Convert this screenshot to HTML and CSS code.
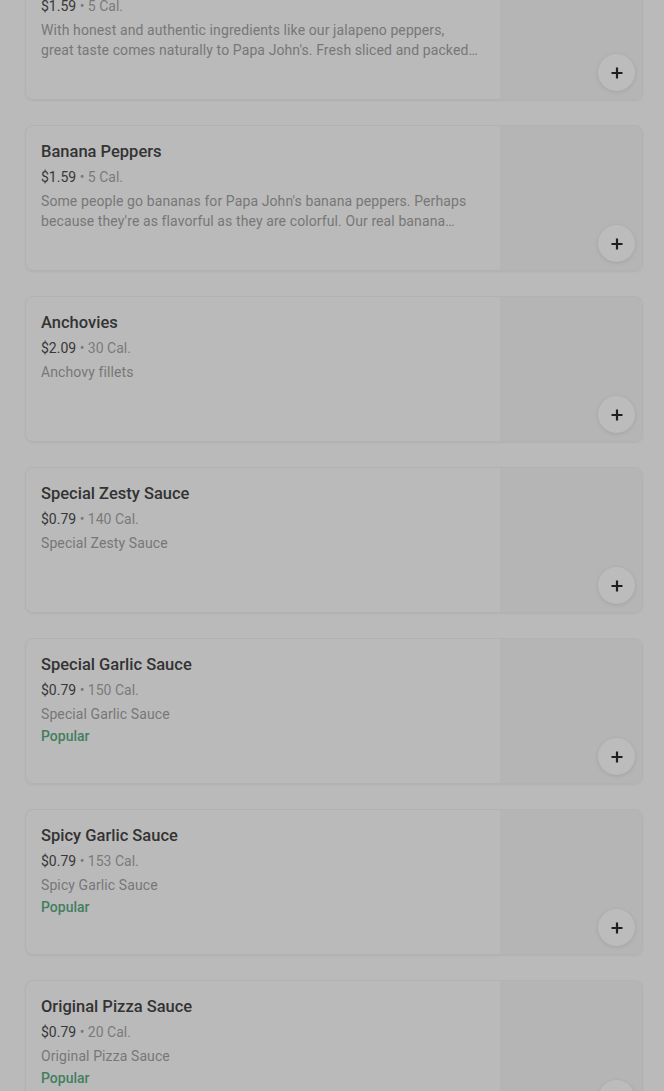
FILE: index.html
```html
<!DOCTYPE html>
<html lang="en">
<head>
    <meta charset="UTF-8">
    <title>Toppings</title>
    <link rel="stylesheet" href="styles.css">
</head>
<body>

    <!-- Item list -->
    <ul class="item-list">
        <li class="item-card">
            <div class="item-info">
                <h3 class="item-title">Jalapeno Peppers</h3>
                <p class="item-meta"><span class="price">$1.59</span> • 5 Cal.</p>
                <p class="item-desc">With honest and authentic ingredients like our jalapeno peppers, great taste comes naturally to Papa John's. Fresh sliced and packed with flavor, they add just the right kick.</p>
            </div>
            <div class="item-image">
                <button class="add-button" aria-label="Add">
                    <svg width="14" height="14" viewBox="0 0 14 14"><path d="M7 1.5v11M1.5 7h11" stroke="#1f1f1f" stroke-width="2.2"/></svg>
                </button>
            </div>
        </li>

        <li class="item-card">
            <div class="item-info">
                <h3 class="item-title">Banana Peppers</h3>
                <p class="item-meta"><span class="price">$1.59</span> • 5 Cal.</p>
                <p class="item-desc">Some people go bananas for Papa John's banana peppers. Perhaps because they're as flavorful as they are colorful. Our real banana peppers bring a mild, tangy bite.</p>
            </div>
            <div class="item-image">
                <button class="add-button" aria-label="Add">
                    <svg width="14" height="14" viewBox="0 0 14 14"><path d="M7 1.5v11M1.5 7h11" stroke="#1f1f1f" stroke-width="2.2"/></svg>
                </button>
            </div>
        </li>

        <li class="item-card">
            <div class="item-info">
                <h3 class="item-title">Anchovies</h3>
                <p class="item-meta"><span class="price">$2.09</span> • 30 Cal.</p>
                <p class="item-desc">Anchovy fillets</p>
            </div>
            <div class="item-image">
                <button class="add-button" aria-label="Add">
                    <svg width="14" height="14" viewBox="0 0 14 14"><path d="M7 1.5v11M1.5 7h11" stroke="#1f1f1f" stroke-width="2.2"/></svg>
                </button>
            </div>
        </li>

        <li class="item-card">
            <div class="item-info">
                <h3 class="item-title">Special Zesty Sauce</h3>
                <p class="item-meta"><span class="price">$0.79</span> • 140 Cal.</p>
                <p class="item-desc">Special Zesty Sauce</p>
            </div>
            <div class="item-image">
                <button class="add-button" aria-label="Add">
                    <svg width="14" height="14" viewBox="0 0 14 14"><path d="M7 1.5v11M1.5 7h11" stroke="#1f1f1f" stroke-width="2.2"/></svg>
                </button>
            </div>
        </li>

        <li class="item-card">
            <div class="item-info">
                <h3 class="item-title">Special Garlic Sauce</h3>
                <p class="item-meta"><span class="price">$0.79</span> • 150 Cal.</p>
                <p class="item-desc">Special Garlic Sauce</p>
                <p class="item-tag">Popular</p>
            </div>
            <div class="item-image">
                <button class="add-button" aria-label="Add">
                    <svg width="14" height="14" viewBox="0 0 14 14"><path d="M7 1.5v11M1.5 7h11" stroke="#1f1f1f" stroke-width="2.2"/></svg>
                </button>
            </div>
        </li>

        <li class="item-card">
            <div class="item-info">
                <h3 class="item-title">Spicy Garlic Sauce</h3>
                <p class="item-meta"><span class="price">$0.79</span> • 153 Cal.</p>
                <p class="item-desc">Spicy Garlic Sauce</p>
                <p class="item-tag">Popular</p>
            </div>
            <div class="item-image">
                <button class="add-button" aria-label="Add">
                    <svg width="14" height="14" viewBox="0 0 14 14"><path d="M7 1.5v11M1.5 7h11" stroke="#1f1f1f" stroke-width="2.2"/></svg>
                </button>
            </div>
        </li>

        <li class="item-card">
            <div class="item-info">
                <h3 class="item-title">Original Pizza Sauce</h3>
                <p class="item-meta"><span class="price">$0.79</span> • 20 Cal.</p>
                <p class="item-desc">Original Pizza Sauce</p>
                <p class="item-tag">Popular</p>
            </div>
            <div class="item-image">
                <button class="add-button" aria-label="Add">
                    <svg width="14" height="14" viewBox="0 0 14 14"><path d="M7 1.5v11M1.5 7h11" stroke="#1f1f1f" stroke-width="2.2"/></svg>
                </button>
            </div>
        </li>
    </ul>

</body>
</html>
```

FILE: styles.css
```css
body {
    margin: 0;
    font-family: Roboto, "Liberation Sans", sans-serif;
    background-color: #bababa; /* page under the dim overlay */
    color: #2f2f2f;
    overflow: hidden;
}

/* List of items, scrolled a little */
.item-list {
    list-style: none;
    margin: -46px 0 0 0;
    padding: 0 21px 0 25px;
    display: flex;
    flex-direction: column;
    gap: 25px;
}

/* Card */
.item-card {
    display: flex;
    height: 146px;
    box-sizing: border-box;
    border: 1px solid #b2b2b2;
    border-radius: 8px;
    overflow: hidden;
    box-shadow: 0 1px 2px rgba(0, 0, 0, 0.05);
}

.item-info {
    flex: 1;
    padding: 16px 20px 0 15px;
    min-width: 0;
}

.item-title {
    margin: 0;
    font-size: 16.5px;
    font-weight: 500;
    line-height: 20px;
    color: #333333;
}

.item-meta {
    margin: 5px 0 0 0;
    font-size: 14px;
    line-height: 20px;
    color: #7a7a7a;
}

.item-meta .price {
    color: #383838;
}

.item-desc {
    margin: 4px 0 0 0;
    font-size: 14px;
    line-height: 20px;
    letter-spacing: 0.1px;
    color: #777777;
    display: -webkit-box;
    -webkit-line-clamp: 2;
    -webkit-box-orient: vertical;
    overflow: hidden;
}

.item-tag {
    margin: 2px 0 0 0;
    font-size: 14px;
    font-weight: 500;
    line-height: 20px;
    color: #437e5f;
}

/* Image placeholder on the right */
.item-image {
    position: relative;
    width: 142px;
    flex-shrink: 0;
    background-color: #b5b5b5;
}

/* Round add button */
.add-button {
    position: absolute;
    right: 7px;
    bottom: 8px;
    width: 37px;
    height: 37px;
    border: none;
    border-radius: 50%;
    background-color: #bcbcbc;
    box-shadow: 0 1px 4px rgba(0, 0, 0, 0.1);
    display: flex;
    align-items: center;
    justify-content: center;
    padding: 0;
}
```
